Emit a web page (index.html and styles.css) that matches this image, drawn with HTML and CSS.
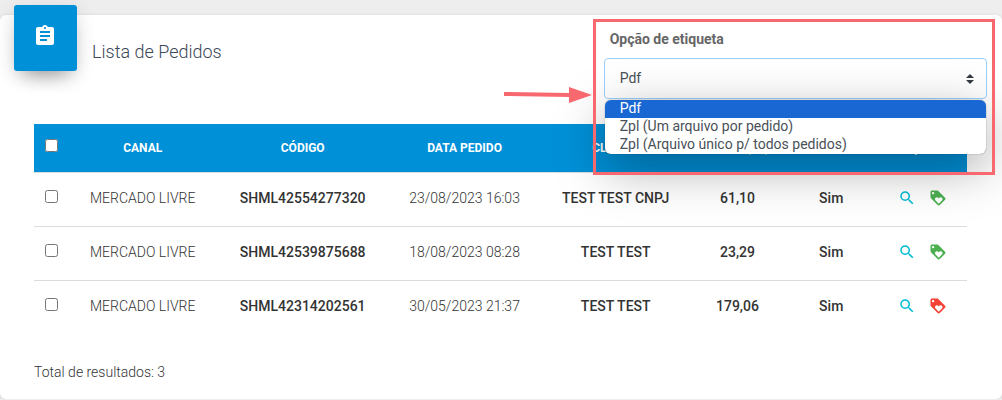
FILE: index.html
```html
<!DOCTYPE html>
<html lang="pt-BR">
<head>
  <meta charset="utf-8">
  <meta name="viewport" content="width=device-width,initial-scale=1">

  <title>Lista de Pedidos</title>

  <link rel="stylesheet" href="styles.css">
</head>
<body>
  <svg class="sprite" aria-hidden="true">
    <symbol id="icon-search" viewBox="0 0 24 24">
      <path d="M15.5 14h-.79l-.28-.27A6.47 6.47 0 0 0 16 9.5 6.5 6.5 0 1 0 9.5 16c1.61 0 3.09-.59 4.23-1.57l.27.28v.79l5 4.99L20.49 19l-4.99-5zm-6 0C7.01 14 5 11.99 5 9.5S7.01 5 9.5 5 14 7.01 14 9.5 11.99 14 9.5 14z"/>
    </symbol>
    <symbol id="icon-loyalty" viewBox="0 0 24 24">
      <path d="M21.41 11.58l-9-9C12.05 2.22 11.55 2 11 2H4c-1.1 0-2 .9-2 2v7c0 .55.22 1.05.59 1.42l9 9c.36.36.86.58 1.41.58s1.05-.22 1.41-.59l7-7c.37-.36.59-.86.59-1.41s-.23-1.06-.59-1.42zM5.5 7C4.67 7 4 6.33 4 5.5S4.67 4 5.5 4 7 4.67 7 5.5 6.33 7 5.5 7zm11.77 8.27L13 19.54l-4.27-4.27C8.28 14.81 8 14.19 8 13.5c0-1.38 1.12-2.5 2.5-2.5.69 0 1.32.28 1.77.74l.73.72.73-.73c.45-.45 1.08-.73 1.77-.73 1.38 0 2.5 1.12 2.5 2.5 0 .69-.28 1.32-.73 1.77z"/>
    </symbol>
  </svg>

  <main class="card">
    <header class="card-header">
      <div class="card-icon">
        <svg viewBox="0 0 24 24" aria-hidden="true">
          <path d="M19 3h-4.18C14.4 1.84 13.3 1 12 1c-1.3 0-2.4.84-2.82 2H5c-1.1 0-2 .9-2 2v14c0 1.1.9 2 2 2h14c1.1 0 2-.9 2-2V5c0-1.1-.9-2-2-2zm-7 0c.55 0 1 .45 1 1s-.45 1-1 1-1-.45-1-1 .45-1 1-1zm2 14H7v-2h7v2zm3-4H7v-2h10v2zm0-4H7V7h10v2z"/>
        </svg>
      </div>
      <h1 class="card-title">Lista de Pedidos</h1>

      <div class="label-option">
        <label for="label-format">Opção de etiqueta</label>
        <select id="label-format" name="label-format">
          <option>Pdf</option>
          <option>Zpl (Um arquivo por pedido)</option>
          <option>Zpl (Arquivo único p/ todos pedidos)</option>
        </select>
        <ul class="options" role="listbox" aria-label="Opção de etiqueta">
          <li class="selected" role="option" aria-selected="true">Pdf</li>
          <li role="option">Zpl (Um arquivo por pedido)</li>
          <li role="option">Zpl (Arquivo único p/ todos pedidos)</li>
        </ul>
        <div class="highlight"></div>
        <svg class="arrow" viewBox="0 0 88 16" aria-hidden="true">
          <path d="M0 5l65 1V0l23 8-23 8v-6L0 9z"/>
        </svg>
      </div>
    </header>

    <div class="card-body">
      <table class="orders">
        <thead>
          <tr>
            <th class="col-check"><input type="checkbox" aria-label="Selecionar todos"></th>
            <th class="col-channel">Canal</th>
            <th class="col-code">Código</th>
            <th class="col-date">Data Pedido</th>
            <th class="col-client">Cliente</th>
            <th class="col-value">Valor (R$)</th>
            <th class="col-printed">Impresso</th>
            <th class="col-actions">Ações</th>
          </tr>
        </thead>
        <tbody>
          <tr>
            <td class="col-check"><input type="checkbox" aria-label="Selecionar SHML42554277320"></td>
            <td>MERCADO LIVRE</td>
            <td class="strong">SHML42554277320</td>
            <td>23/08/2023 16:03</td>
            <td class="strong">TEST TEST CNPJ</td>
            <td class="strong">61,10</td>
            <td class="strong">Sim</td>
            <td>
              <div class="actions">
                <a class="view" href="#" aria-label="Ver pedido"><svg><use href="#icon-search"/></svg></a>
                <a class="tag" href="#" aria-label="Etiqueta"><svg><use href="#icon-loyalty"/></svg></a>
              </div>
            </td>
          </tr>
          <tr>
            <td class="col-check"><input type="checkbox" aria-label="Selecionar SHML42539875688"></td>
            <td>MERCADO LIVRE</td>
            <td class="strong">SHML42539875688</td>
            <td>18/08/2023 08:28</td>
            <td class="strong">TEST TEST</td>
            <td class="strong">23,29</td>
            <td class="strong">Sim</td>
            <td>
              <div class="actions">
                <a class="view" href="#" aria-label="Ver pedido"><svg><use href="#icon-search"/></svg></a>
                <a class="tag" href="#" aria-label="Etiqueta"><svg><use href="#icon-loyalty"/></svg></a>
              </div>
            </td>
          </tr>
          <tr>
            <td class="col-check"><input type="checkbox" aria-label="Selecionar SHML42314202561"></td>
            <td>MERCADO LIVRE</td>
            <td class="strong">SHML42314202561</td>
            <td>30/05/2023 21:37</td>
            <td class="strong">TEST TEST</td>
            <td class="strong">179,06</td>
            <td class="strong">Sim</td>
            <td>
              <div class="actions">
                <a class="view" href="#" aria-label="Ver pedido"><svg><use href="#icon-search"/></svg></a>
                <a class="tag tag-danger" href="#" aria-label="Etiqueta"><svg><use href="#icon-loyalty"/></svg></a>
              </div>
            </td>
          </tr>
        </tbody>
      </table>

      <p class="total">Total de resultados: 3</p>
    </div>
  </main>
</body>
</html>
```
FILE: styles.css
```css
*, :after, :before {
  box-sizing: border-box;
}

body {
  margin: 0;
  padding-top: 15px;
  background-color: #eee;
  color: #333;
  font-family: Roboto, sans-serif;
  font-size: 14px;
  font-weight: 300;
  line-height: 18px;
}

.sprite {
  display: none;
}

svg {
  display: block;
  fill: currentColor;
}

.card {
  background-color: #fff;
  border-radius: 6px;
  box-shadow: 0 1px 4px rgba(0, 0, 0, .14);
}

.card-header {
  display: flex;
  align-items: flex-start;
  padding: 0 15px 0 14px;
}

.card-icon {
  margin-top: -10px;
  padding: 19px 20px 23px 19px;
  border-radius: 3px;
  background-color: #0090d7;
  box-shadow: 0 12px 20px -10px rgba(0, 0, 0, .4), 0 4px 20px rgba(0, 0, 0, .12);
  color: #fff;
}

.card-icon svg {
  width: 24px;
  height: 24px;
}

.card-title {
  flex: 1;
  margin: 24px 0 0 15px;
  color: #3c4858;
  font-size: 18px;
  font-weight: 300;
  line-height: 26px;
}

.label-option {
  position: relative;
  flex: 0 0 39.4%;
  padding-top: 15px;
}

.label-option label {
  display: block;
  margin: 0 6px 10px;
  color: #666;
  font-weight: 700;
}

.label-option select {
  display: block;
  width: 100%;
  height: 41px;
  padding: 0 15px 2px;
  border: 1px solid #9bcffa;
  border-radius: 4px;
  appearance: none;
  background: #fff url("data:image/svg+xml,%3Csvg xmlns='http://www.w3.org/2000/svg' viewBox='0 0 4 5'%3E%3Cpath fill='%23343a40' d='M2 0L0 2h4zm0 5L0 3h4z'/%3E%3C/svg%3E") no-repeat right 12px center / 8px 10px;
  color: #495057;
  font: inherit;
  font-weight: 400;
}

.options {
  position: absolute;
  top: 100%;
  left: 1px;
  right: 1px;
  margin: 1px 0 0;
  padding: 0;
  overflow: hidden;
  border-radius: 6px;
  background-color: #fff;
  box-shadow: 0 0 1px rgba(0, 0, 0, .7), 0 14px 50px rgba(0, 0, 0, .34);
  color: #495057;
  font-weight: 400;
  line-height: 16px;
  list-style: none;
}

.options li {
  padding: 0 15px 2px;
}

.options .selected {
  background-color: #1967d2;
  color: #fff;
}

.highlight {
  position: absolute;
  top: 4px;
  right: -8px;
  bottom: -76px;
  left: -11px;
  border: 3px solid #f8696f;
  pointer-events: none;
}

.arrow {
  position: absolute;
  right: 100%;
  bottom: -4px;
  width: 88px;
  height: 16px;
  margin-right: 12px;
  color: #f8696f;
}

.card-body {
  padding: 25px 35px 18px 34px;
}

.orders {
  width: 100%;
  border-collapse: collapse;
  table-layout: fixed;
  text-align: center;
}

.orders th {
  height: 48px;
  padding: 0;
  background-color: #0090d7;
  color: #fff;
  font-size: 12px;
  font-weight: 700;
  text-transform: uppercase;
}

.orders td {
  height: 54px;
  padding: 0 0 2px;
  border-top: 1px solid #dcdcdc;
}

.orders .strong {
  font-weight: 500;
}

.orders input {
  display: block;
  width: 13px;
  height: 13px;
  margin: 0 0 4px 11px;
}

.col-check {
  width: 3.7%;
}

.col-channel {
  width: 15.9%;
}

.col-code {
  width: 18.4%;
}

.col-date {
  width: 16.3%;
}

.col-client {
  width: 16.1%;
}

.col-value {
  width: 10%;
}

.col-printed {
  width: 10.1%;
}

.col-actions {
  width: 9.5%;
}

.actions {
  display: flex;
  justify-content: center;
  gap: 13px;
}

.actions svg {
  width: 18px;
  height: 18px;
}

.view {
  color: #00bcd4;
}

.tag {
  color: #4caf50;
}

.tag-danger {
  color: #f44336;
}

.total {
  margin: 29px 0 0;
}
```
